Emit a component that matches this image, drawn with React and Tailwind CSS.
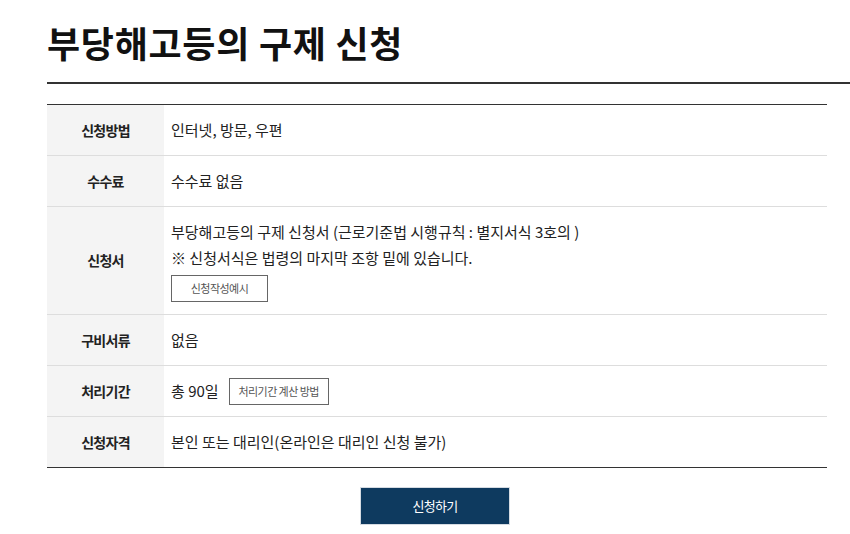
const font = { fontFamily: '"Noto Sans CJK KR", "Noto Sans", sans-serif' };

const rows = [
  { label: "신청방법", body: <span>인터넷, 방문, 우편</span> },
  { label: "수수료", body: <span>수수료 없음</span> },
  {
    label: "신청서",
    body: (
      <div className="flex flex-col items-start">
        <p>부당해고등의 구제 신청서 (근로기준법 시행규칙 : 별지서식 3호의 )</p>
        <p>※ 신청서식은 법령의 마지막 조항 밑에 있습니다.</p>
        <button
          type="button"
          className="mt-[4px] w-[97px] h-[27px] border border-[#666] text-[11px] leading-none text-[#555] tracking-[-0.05em]"
        >
          신청작성예시
        </button>
      </div>
    ),
  },
  { label: "구비서류", body: <span>없음</span> },
  {
    label: "처리기간",
    body: (
      <div className="flex items-center gap-[10px] h-[26px]">
        <span>총 90일</span>
        <button
          type="button"
          className="w-[100px] h-[27px] shrink-0 border border-[#666] text-[11px] leading-none text-[#555] tracking-[-0.05em]"
        >
          처리기간 계산 방법
        </button>
      </div>
    ),
  },
  { label: "신청자격", body: <span>본인 또는 대리인(온라인은 대리인 신청 불가)</span> },
];

export default function App() {
  return (
    <div className="w-[850px] h-[534px] bg-white overflow-hidden pl-[47px] text-[#222]" style={font}>
      <div className="pt-[18px] pb-[16px] border-b-2 border-[#333]">
        <h1 className="text-[36px] leading-[48px] font-bold text-[#111] tracking-[0.02em]">
          부당해고등의 구제 신청
        </h1>
      </div>

      <table className="mt-[20px] w-[780px] border-collapse border-t border-b border-[#333]">
        <tbody>
          {rows.map((row, i) => (
            <tr key={row.label} className={i > 0 ? "border-t border-[#ddd]" : ""}>
              <th className="w-[117px] bg-[#f4f4f4] text-[14px] font-bold text-[#222] tracking-[-0.05em] align-middle">
                {row.label}
              </th>
              <td className="px-[7px] py-[12px] text-[15px] leading-[26px] tracking-[0em] text-[#222] align-middle">
                {row.body}
              </td>
            </tr>
          ))}
        </tbody>
      </table>

      <div className="w-[776px] flex justify-center mt-[20px]">
        <button
          type="button"
          className="w-[148px] h-[36px] bg-[#0e3a5f] text-white text-[13px] tracking-[-0.05em] outline outline-1 outline-[#d5dbe2]"
        >
          신청하기
        </button>
      </div>
    </div>
  );
}
